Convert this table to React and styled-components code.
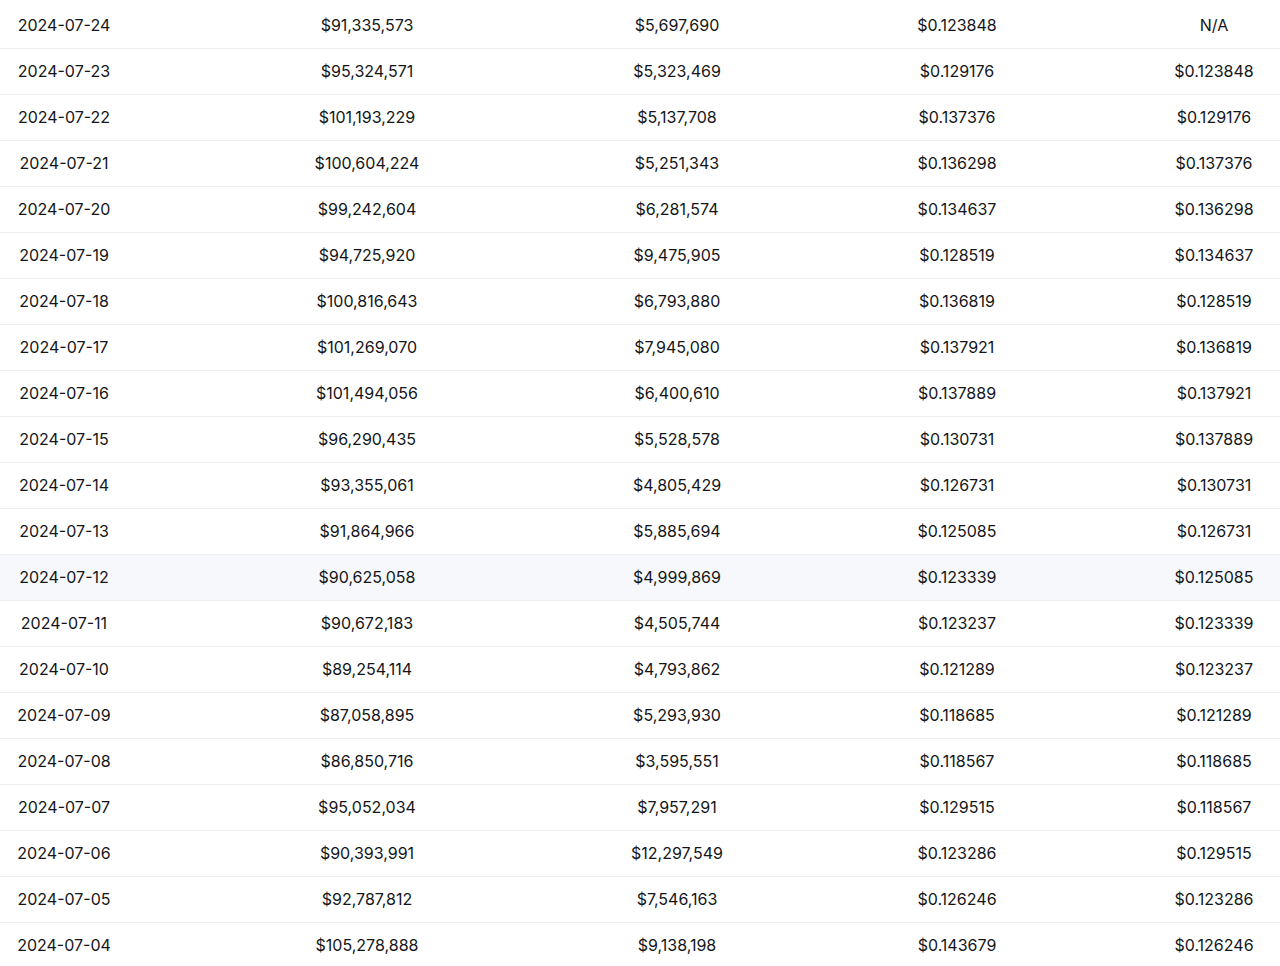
import React from 'react'
import styled, { createGlobalStyle } from 'styled-components'

const rows = [
  ['2024-07-24', '$91,335,573', '$5,697,690', '$0.123848', 'N/A'],
  ['2024-07-23', '$95,324,571', '$5,323,469', '$0.129176', '$0.123848'],
  ['2024-07-22', '$101,193,229', '$5,137,708', '$0.137376', '$0.129176'],
  ['2024-07-21', '$100,604,224', '$5,251,343', '$0.136298', '$0.137376'],
  ['2024-07-20', '$99,242,604', '$6,281,574', '$0.134637', '$0.136298'],
  ['2024-07-19', '$94,725,920', '$9,475,905', '$0.128519', '$0.134637'],
  ['2024-07-18', '$100,816,643', '$6,793,880', '$0.136819', '$0.128519'],
  ['2024-07-17', '$101,269,070', '$7,945,080', '$0.137921', '$0.136819'],
  ['2024-07-16', '$101,494,056', '$6,400,610', '$0.137889', '$0.137921'],
  ['2024-07-15', '$96,290,435', '$5,528,578', '$0.130731', '$0.137889'],
  ['2024-07-14', '$93,355,061', '$4,805,429', '$0.126731', '$0.130731'],
  ['2024-07-13', '$91,864,966', '$5,885,694', '$0.125085', '$0.126731'],
  ['2024-07-12', '$90,625,058', '$4,999,869', '$0.123339', '$0.125085'],
  ['2024-07-11', '$90,672,183', '$4,505,744', '$0.123237', '$0.123339'],
  ['2024-07-10', '$89,254,114', '$4,793,862', '$0.121289', '$0.123237'],
  ['2024-07-09', '$87,058,895', '$5,293,930', '$0.118685', '$0.121289'],
  ['2024-07-08', '$86,850,716', '$3,595,551', '$0.118567', '$0.118685'],
  ['2024-07-07', '$95,052,034', '$7,957,291', '$0.129515', '$0.118567'],
  ['2024-07-06', '$90,393,991', '$12,297,549', '$0.123286', '$0.129515'],
  ['2024-07-05', '$92,787,812', '$7,546,163', '$0.126246', '$0.123286'],
  ['2024-07-04', '$105,278,888', '$9,138,198', '$0.143679', '$0.126246'],
]

function App() {
  return (
    <>
      <Global />
      <Table>
        {rows.map((r) => (
          <Row key={r[0]} $active={r[0] === '2024-07-12'}>
            {r.map((c, i) => (
              <Cell key={i}>{c}</Cell>
            ))}
          </Row>
        ))}
      </Table>
    </>
  )
}

export default App

const Global = createGlobalStyle`
  body{
    margin:0;
    background:#fff;
    font-family:Inter, "Noto Sans", sans-serif;
    color:#131519;
    overflow:hidden;
  }
`

const Table = styled.div`
  width:1280px;
  padding-top:3px;
`

const Row = styled.div`
  box-sizing:border-box;
  display:grid;
  grid-template-columns:128px 478px 142px 418px 96px 18px;
  height:46px;
  padding-bottom:2px;
  align-items:center;
  border-bottom:1px solid #eceef1;
  background:${(p) => (p.$active ? '#f6f8fb' : '#fff')};
`

const Cell = styled.div`
  text-align:center;
  font-size:16px;
  white-space:nowrap;
`
